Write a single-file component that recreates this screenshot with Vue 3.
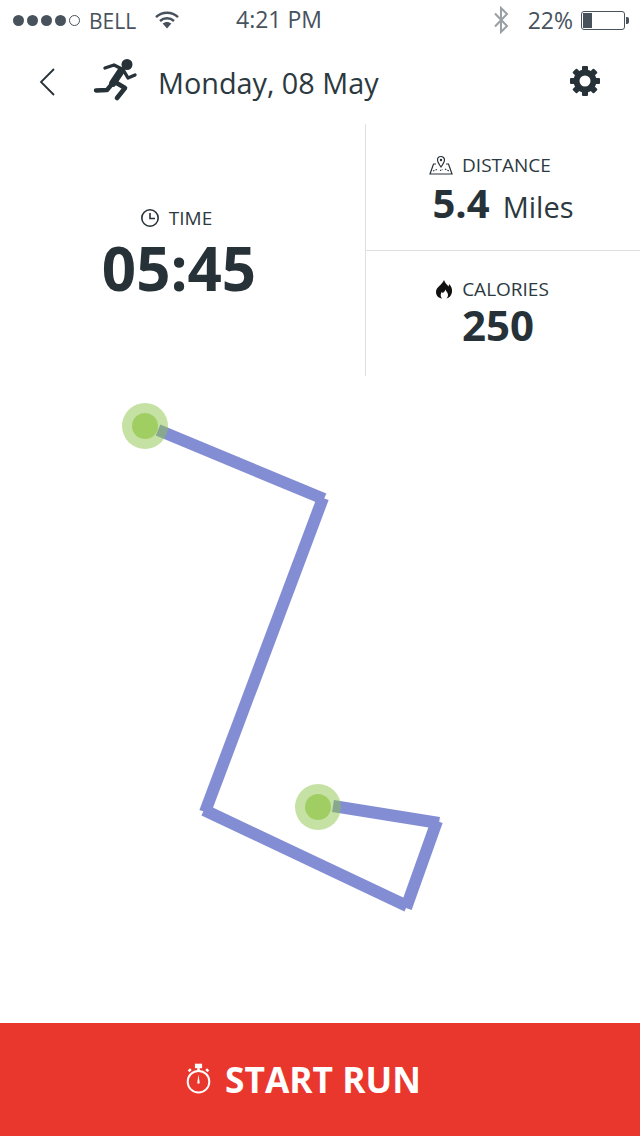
<script setup>
const route = [
  [158, 430, 324, 499],
  [323, 498, 205, 812],
  [204, 810, 407, 906],
  [437, 821, 406, 908],
  [333, 806, 439, 823],
]
const dots = [
  [145, 426],
  [318, 807],
]
const teeth = [0, 45, 90, 135, 180, 225, 270, 315]
</script>

<template>
  <div class="screen">
    <div class="status">
      <div class="status-left">
        <span class="signal"><i v-for="n in 5" :key="n" class="dot"></i><i class="dot empty"></i></span>
        <span class="carrier">BELL</span>
        <svg class="wifi" width="24" height="19" viewBox="0 0 24 19">
          <path d="M1 7.2C7 1.2 17 1.2 23 7.2" fill="none" stroke="#47525d" stroke-width="2.4"/>
          <path d="M5 11C9 7.4 15 7.4 19 11" fill="none" stroke="#47525d" stroke-width="2.4"/>
          <path d="M7.6 13.6C10.4 11.4 13.6 11.4 16.4 13.6L12 18.4Z" fill="#47525d"/>
        </svg>
      </div>
      <span class="clock">4:21 PM</span>
      <div class="status-right">
        <svg class="bt" width="16" height="28" viewBox="0 0 16 28">
          <path d="M2 7.5L14 20L8 26V2L14 8L2 20.5" fill="none" stroke="#9a9fa3" stroke-width="2"/>
        </svg>
        <span class="pct">22%</span>
        <span class="battery"><i class="fill"></i></span>
        <i class="nub"></i>
      </div>
    </div>

    <header class="header">
      <svg class="back" width="18" height="30" viewBox="0 0 18 30">
        <path d="M16 2L3 15L16 28" fill="none" stroke="#263238" stroke-width="1.8"/>
      </svg>
      <svg class="runner" width="46" height="44" viewBox="0 0 46 44">
        <circle cx="34" cy="6.500" r="5.500" fill="#263238"/>
        <path d="M12 10L21 7L30 11.500L35 20L42 17" fill="none" stroke="#263238" stroke-width="3.400" stroke-linecap="round" stroke-linejoin="round"/>
        <path d="M28 13L20 25" fill="none" stroke="#263238" stroke-width="7.500" stroke-linecap="round"/>
        <path d="M19 26L14 32L3 32.500" fill="none" stroke="#263238" stroke-width="4.400" stroke-linecap="round" stroke-linejoin="round"/>
        <path d="M22 24L32 30L24 40" fill="none" stroke="#263238" stroke-width="4.600" stroke-linecap="round" stroke-linejoin="round"/>
      </svg>
      <h1 class="title">Monday, 08 May</h1>
      <svg class="gear" width="32" height="32" viewBox="0 0 32 32">
        <circle cx="16" cy="16" r="8.500" fill="none" stroke="#263238" stroke-width="6"/>
        <rect v-for="a in teeth" :key="a" x="13" y="1" width="6" height="6" rx="1" fill="#263238" :transform="`rotate(${a} 16 16)`"/>
      </svg>
    </header>

    <section class="stats">
      <div class="stat stat-time">
        <div class="label label-time">
          <svg width="20" height="20" viewBox="0 0 20 20">
            <circle cx="10" cy="10" r="8.200" fill="none" stroke="#263238" stroke-width="1.600"/>
            <path d="M10 5V10.500H15" fill="none" stroke="#263238" stroke-width="1.600"/>
          </svg>
          <span>TIME</span>
        </div>
        <div class="time-value">05:45</div>
      </div>
      <div class="stat-side">
        <div class="stat stat-distance">
          <div class="label label-distance">
            <svg width="24" height="20" viewBox="0 0 24 20">
              <path d="M7 9H4.500L1 19H23L19.500 9H17" fill="none" stroke="#263238" stroke-width="1.200"/>
              <path d="M12 12C9.500 8.500 8.500 6.800 8.500 5a3.500 3.500 0 0 1 7 0C15.500 6.800 14.500 8.500 12 12Z" fill="#fff" stroke="#263238" stroke-width="1.200"/>
              <circle cx="12" cy="5" r="1.200" fill="#263238"/>
              <path d="M4 16L8 14.500M11 15.500L14 14.500M16 14L20 16" fill="none" stroke="#263238" stroke-width="1.200" stroke-dasharray="1.500 1.200"/>
            </svg>
            <span>DISTANCE</span>
          </div>
          <div class="value"><b>5.4</b><span class="unit">Miles</span></div>
        </div>
        <div class="stat stat-calories">
          <div class="label label-calories">
            <svg width="18" height="20" viewBox="0 0 18 20">
              <path fill="#111" fill-rule="evenodd" d="M9 1C10 4 12 5.500 13.500 7.500C14 6.500 14 6 14 5C16 7 17.500 9.500 17 13C16.500 16.500 14 19 11.500 19.500C13 18 13.500 16 12.500 14C12 13 11 12 10.500 10.500C10 12.500 8.500 13 8 14C7 13.500 7 13 7 12.500C5.500 14.500 5 17.500 7 19.500C3.500 19 1 16.500 1 13C1 8 6.500 6.500 9 1Z"/>
            </svg>
            <span>CALORIES</span>
          </div>
          <div class="value value-calories"><b>250</b></div>
        </div>
      </div>
    </section>

    <main class="map">
      <svg width="640" height="647" viewBox="0 376 640 647">
        <line v-for="(s, i) in route" :key="i" :x1="s[0]" :y1="s[1]" :x2="s[2]" :y2="s[3]" stroke="#838dd3" stroke-width="12"/>
        <g v-for="(d, i) in dots" :key="'d' + i">
          <circle :cx="d[0]" :cy="d[1]" r="23" fill="#8bc34a" fill-opacity=".5"/>
          <circle :cx="d[0]" :cy="d[1]" r="13" fill="#9ccc5c" fill-opacity=".9"/>
        </g>
      </svg>
    </main>

    <button class="start">
      <svg width="27" height="32" viewBox="0 0 30 34">
        <circle cx="15" cy="20" r="12" fill="none" stroke="#fff" stroke-width="2.200"/>
        <rect x="11" y="0" width="8" height="5" fill="#fff"/>
        <rect x="13.500" y="5" width="3" height="3" fill="#fff"/>
        <path d="M4 8.500L6.500 6M26 8.500L23.500 6" stroke="#fff" stroke-width="2.800"/>
        <path d="M15 12L16.300 21a1.300 1.300 0 0 1-2.600 0Z" fill="#fff"/>
      </svg>
      <span>START RUN</span>
    </button>
  </div>
</template>

<style>
html, body { margin: 0; background: #fff; }
</style>

<style scoped>
.screen {
  width: 640px;
  height: 1136px;
  display: flex;
  flex-direction: column;
  background: #fff;
  color: #263238;
  font-family: "Open Sans", "Noto Sans", sans-serif;
  overflow: hidden;
}
.status {
  height: 40px;
  position: relative;
  display: flex;
  align-items: center;
  justify-content: space-between;
  padding: 0 11px 0 13px;
  color: #47525d;
  font-size: 22px;
  flex: none;
}
.status-left, .status-right { display: flex; align-items: center; }
.signal { display: flex; gap: 3px; }
.dot {
  width: 11px;
  height: 11px;
  border-radius: 50%;
  background: #47525d;
}
.dot:nth-child(5) { display: none; }
.dot.empty {
  background: #fff;
  box-sizing: border-box;
  border: 1px solid #47525d;
}
.carrier { margin-left: 9px; font-size: 21px; margin-top: 2px; }
.wifi { margin-left: 19px; margin-top: -2px; }
.clock {
  position: absolute;
  left: 236px;
  top: 3px;
  font-size: 23px;
  line-height: 32px;
}
.bt { margin-right: 19px; }
.pct { font-size: 23px; margin-right: 8px; }
.battery {
  width: 40px;
  height: 15px;
  border: 1px solid #47525d;
  border-radius: 3px;
  padding: 1px;
  display: block;
}
.fill { display: block; width: 9px; height: 15px; background: #47525d; }
.nub { width: 3px; height: 7px; background: #47525d; margin-left: 1px; border-radius: 0 2px 2px 0; }

.header {
  height: 84px;
  display: flex;
  align-items: center;
  padding: 0 39px 0 38px;
  flex: none;
}
.back { flex: none; }
.runner { margin-left: 37px; margin-top: -4px; flex: none; }
.title {
  margin: 0 0 0 19px;
  font-size: 28.800px;
  font-weight: 400;
  flex: 1;
  color: #2c3940;
}
.gear { flex: none; margin-top: -3px; }

.stats { display: flex; height: 252px; flex: none; }
.stat { display: flex; flex-direction: column; align-items: center; }
.stat-time {
  width: 358px;
  padding-right: 7px;
  border-right: 1px solid #e0e0e0;
  justify-content: center;
  padding-top: 7px;
  height: 245px;
}
.stat-side { flex: 1; display: flex; flex-direction: column; }
.stat-distance {
  height: 127px;
  border-bottom: 1px solid #e0e0e0;
  padding-top: 28px;
  box-sizing: border-box;
}
.stat-calories { padding-top: 25px; }
.label {
  display: flex;
  align-items: center;
  gap: 9px;
  font-size: 19px;
  line-height: 26px;
  color: #2c3940;
}
.label-time { margin-right: 6px; }
.label-distance { margin-right: 26px; }
.label-calories { margin-right: 22px; }
.time-value {
  font-size: 60px;
  font-weight: 700;
  line-height: 68px;
  margin-top: 3px;
}
.value { line-height: 48px; font-size: 29px; margin-top: 1px; }
.value b { font-size: 40px; font-weight: 700; }
.value-calories { margin: -1px 10px 0 0; }
.value-calories b { font-size: 42px; }
.unit { margin-left: 13px; color: #2c3940; }

.map { flex: 1; display: block; min-height: 0; }
.map svg { display: block; }

.start {
  height: 113px;
  flex: none;
  border: 0;
  padding: 0 34px 2px 0;
  background: #e9372d;
  color: #fff;
  font-family: inherit;
  font-size: 35.300px;
  font-weight: 700;
  display: flex;
  align-items: center;
  justify-content: center;
  gap: 13px;
}
</style>
